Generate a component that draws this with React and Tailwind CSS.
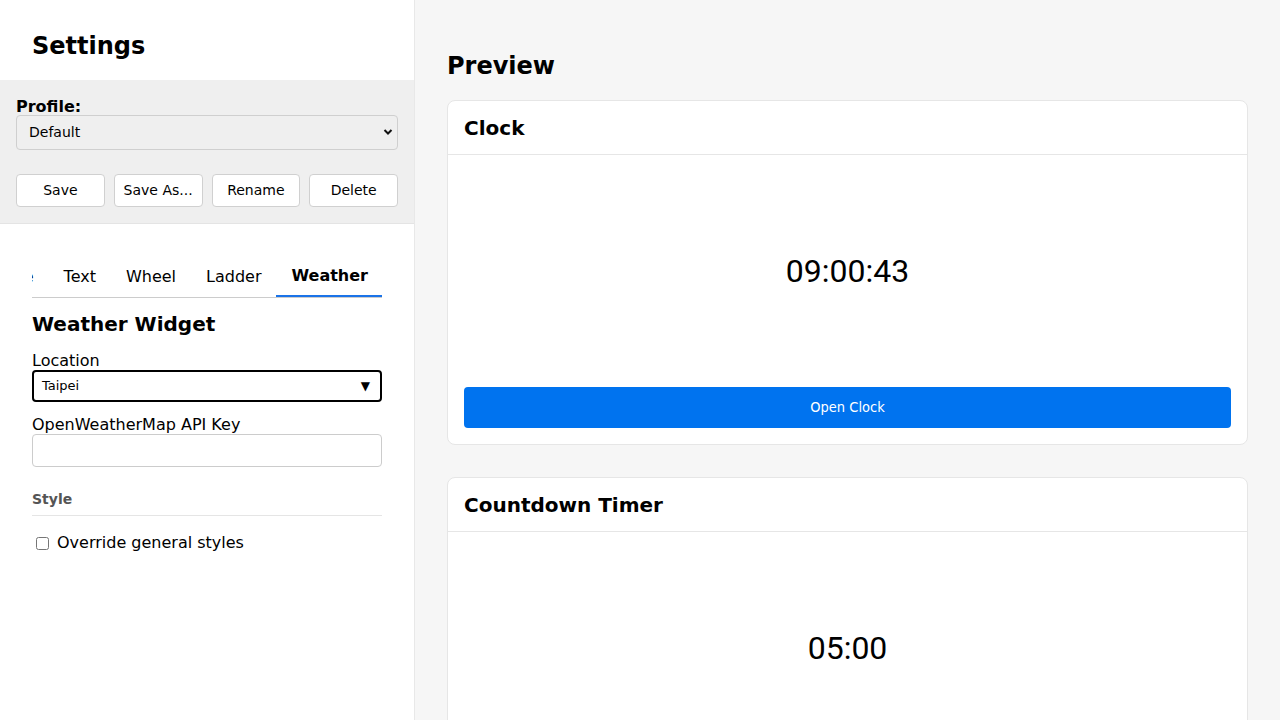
const sans = { fontFamily: '"DejaVu Sans", sans-serif' };

const tabs = ["Image", "Text", "Wheel", "Ladder", "Weather"];

function PreviewCard({ title, value, children }) {
  return (
    <div className="bg-white border border-[#e6e6e6] rounded-lg">
      <div className="px-4 h-[54px] flex items-center border-b border-[#e6e6e6]">
        <h3 className="text-[20px] font-bold text-black">{title}</h3>
      </div>
      <div className="p-4">
        <div
          className="h-[200px] flex items-center justify-center text-[32px] text-black"
          style={{ fontFamily: 'Roboto, "Liberation Sans", sans-serif' }}
        >
          {value}
        </div>
        {children}
      </div>
    </div>
  );
}

export default function App() {
  return (
    <div className="flex h-[720px] overflow-hidden text-black" style={sans}>
      {/* Sidebar */}
      <aside className="w-[415px] shrink-0 bg-white border-r border-[#e8e8e8] flex flex-col">
        <div className="h-[80px] px-8 pt-[30px]">
          <h1 className="text-[24px] font-bold leading-8">Settings</h1>
        </div>

        <div className="bg-[#efefef] border-b border-[#e4e4e4] px-4 pt-[17px] pb-4">
          <label className="block text-[16px] font-bold leading-5">Profile:</label>
          <div className="relative -mt-[2px]">
            <select
              className="w-full h-[35px] appearance-none bg-[#efefef] border border-[#cfcfcf] rounded px-3 text-[14px]"
              style={sans}
              defaultValue="Default"
            >
              <option>Default</option>
            </select>
            <svg className="absolute right-[5px] top-[13px]" width="10" height="8" viewBox="0 0 10 8">
              <path d="M1.5 2 L5 5.5 L8.5 2" fill="none" stroke="#111" strokeWidth="2" />
            </svg>
          </div>
          <div className="grid grid-cols-4 gap-[9px] mt-6">
            {["Save", "Save As...", "Rename", "Delete"].map((b) => (
              <button
                key={b}
                className="h-[33px] bg-white border border-[#d0d0d0] rounded text-[14px]"
                style={sans}
              >
                {b}
              </button>
            ))}
          </div>
        </div>

        <div className="px-8 pt-[33px]">
          <div className="flex justify-end overflow-hidden border-b border-[#cccccc]">
            {tabs.map((t) => (
              <div
                key={t}
                className={
                  t === "Weather"
                    ? "shrink-0 pl-[15px] pr-[14px] h-[40px] flex items-center text-[16px] font-bold border-b-2 border-[#1a73e8] -mb-px"
                    : "shrink-0 px-[15px] h-[40px] flex items-center text-[16px]"
                }
              >
                {t}
              </div>
            ))}
          </div>

          <h2 className="text-[20px] font-bold mt-[14px] leading-6">Weather Widget</h2>

          <label className="block text-[16px] mt-[15px] leading-5">Location</label>
          <div className="h-[32px] border-2 border-black rounded-[4px] flex items-center justify-between px-2 text-[13px] -mt-px">
            <span>Taipei</span>
            <span className="text-[12px] mr-[2px]">▼</span>
          </div>

          <label className="block text-[16px] mt-[13px] leading-5">OpenWeatherMap API Key</label>
          <input
            className="block w-full h-[33px] border border-[#cccccc] rounded-[4px] -mt-px px-2"
            style={sans}
          />

          <div className="mt-[22px] pb-[5px] border-b border-[#e5e5e5] text-[14px] font-bold text-[#555555]">Style</div>

          <label className="flex items-center gap-[8px] mt-[15px] text-[16px] pl-1">
            <input type="checkbox" className="w-[13px] h-[13px]" />
            <span>Override general styles</span>
          </label>
        </div>
      </aside>

      {/* Preview */}
      <main className="flex-1 bg-[#f6f6f6] px-8 pt-[50px] overflow-hidden">
        <h2 className="text-[24px] font-bold leading-8 mb-[18px]">Preview</h2>
        <div className="flex flex-col gap-8">
          <PreviewCard title="Clock" value="09:00:43">
            <button
              className="mt-4 w-full h-[41px] bg-[#0073ef] rounded-[4px] text-white text-[14.5px]"
              style={{ fontFamily: '"DejaVu Sans Condensed", "DejaVu Sans", sans-serif' }}
            >
              Open Clock
            </button>
          </PreviewCard>
          <PreviewCard title="Countdown Timer" value="05:00" />
        </div>
      </main>
    </div>
  );
}
